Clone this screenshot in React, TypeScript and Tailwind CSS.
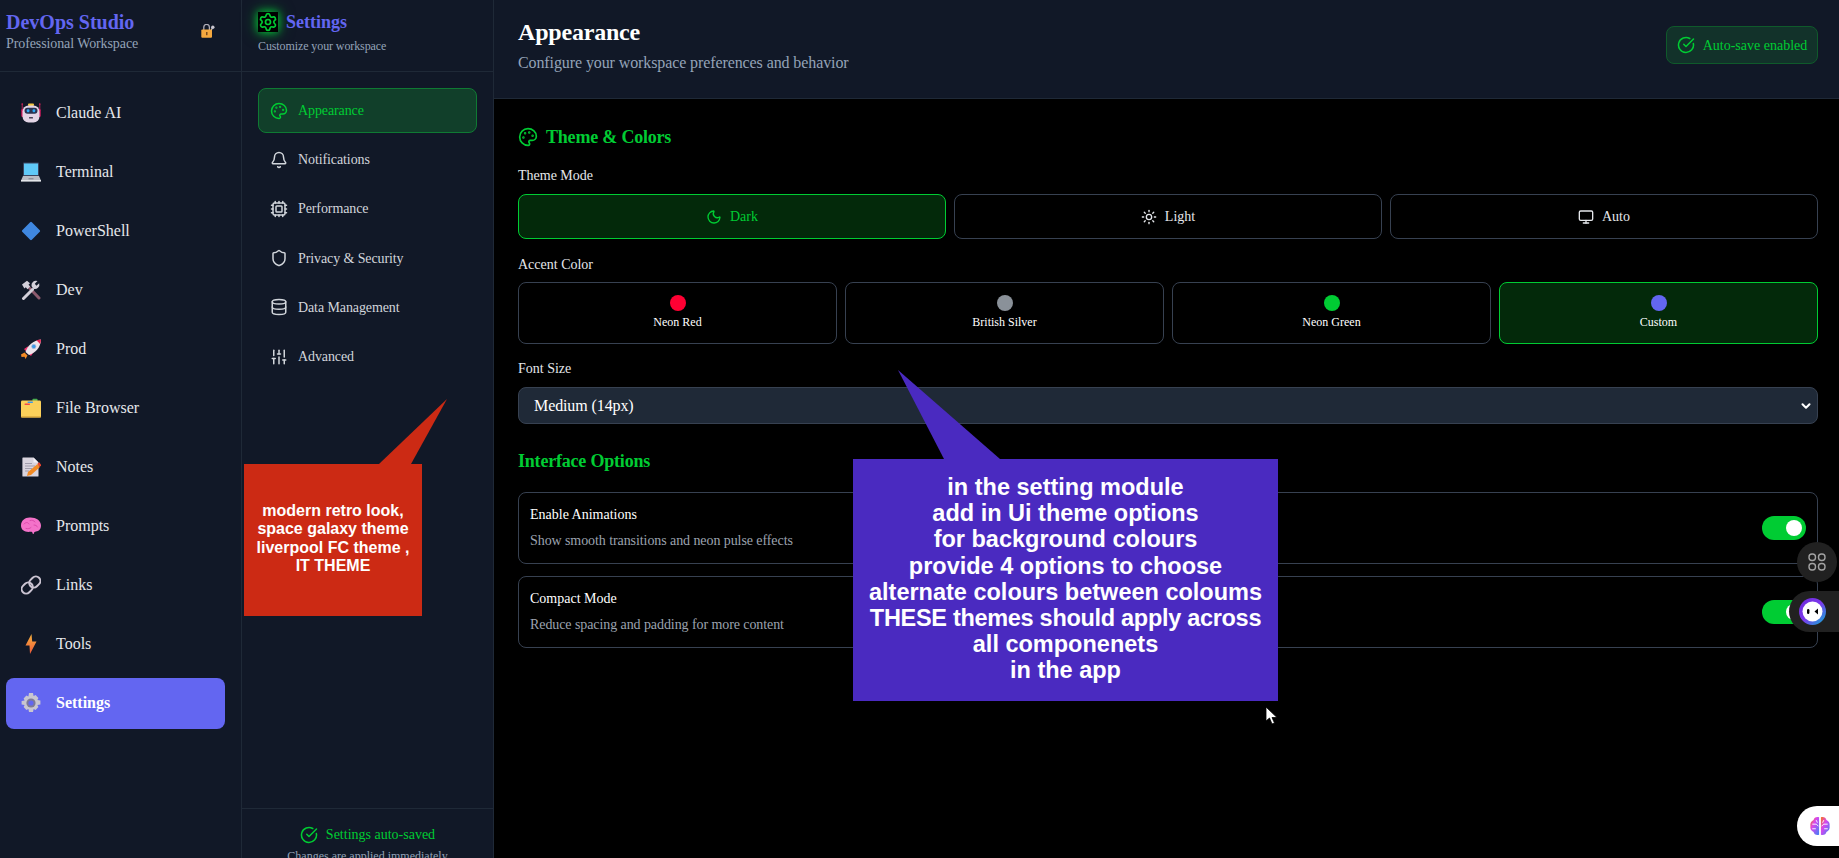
import { Palette, Bell, Cpu, Shield, Database, SlidersVertical, Settings, CircleCheckBig, Moon, Sun, Monitor, ChevronDown } from 'lucide-react'

const RobotEmoji = () => (
  <svg width="20" height="20" viewBox="0 0 20 20">
    <path d="M1.200 1v6M18.800 1v6" stroke="#e0245e" strokeWidth="0.8" />
    <circle cx="1.200" cy="1" r="0.8" fill="#e0245e" />
    <circle cx="18.800" cy="1" r="0.8" fill="#e0245e" />
    <rect x="7" y="0.5" width="6" height="2.500" rx="1" fill="#f5c542" />
    <rect x="0.3" y="6" width="3" height="8" rx="1.200" fill="#d81b60" />
    <rect x="16.700" y="6" width="3" height="8" rx="1.200" fill="#d81b60" />
    <rect x="1.500" y="2.500" width="17" height="17" rx="6" fill="#e3d5e6" />
    <rect x="3.500" y="4.800" width="13" height="6" rx="3" fill="#2b3350" />
    <rect x="5.800" y="6.300" width="2.600" height="3" rx="1" fill="#2ea8f5" />
    <rect x="11.600" y="6.300" width="2.600" height="3" rx="1" fill="#2ea8f5" />
    <rect x="8" y="14" width="4" height="1.600" rx="0.6" fill="#4a4458" />
  </svg>
)

const LaptopEmoji = () => (
  <svg width="20" height="20" viewBox="0 0 20 20">
    <rect x="2" y="0.5" width="16" height="13.500" rx="0.8" fill="#3a4560" />
    <rect x="3" y="1.500" width="14" height="11.500" fill="#5fc9f8" />
    <path d="M2 14h16l2 4.600H0z" fill="#b9bcc4" />
    <rect x="0" y="18" width="20" height="1.600" fill="#e4e6ea" />
    <rect x="7.500" y="16" width="5" height="1.400" fill="#8d919b" />
  </svg>
)

const DiamondEmoji = () => (
  <svg width="20" height="20" viewBox="0 0 20 20">
    <rect x="3.200" y="3.200" width="13.600" height="13.600" rx="1.200" transform="rotate(45 10 10)" fill="#3f87e0" />
  </svg>
)

const ToolsEmoji = () => (
  <svg width="20" height="20" viewBox="0 0 20 20">
    <path d="M7 6.500l11 11.500" stroke="#8d5b6e" strokeWidth="3" strokeLinecap="round" />
    <path d="M1 4.500L6 .8l3 2.400-1.500 1.600 1.600 1.800-2.600 2.600-1.700-2-1.400 1.200z" fill="#d4d0da" />
    <path d="M2.500 18.500l9-9" stroke="#d4d0da" strokeWidth="3" strokeLinecap="round" />
    <path d="M10.500 6a4.500 4.500 0 0 1 6-5l-2.700 2.700 1.600 2 2.800-2.500a4.500 4.500 0 0 1-6 5.500z" fill="#d4d0da" />
  </svg>
)

const RocketEmoji = () => (
  <svg width="20" height="20" viewBox="0 0 20 20">
    <path d="M0 15.500l3.500-2 3 3-2 3.500-1-2.200-3 .2z" fill="#f28a24" />
    <path d="M3 10l4.500-3-1 7zM10 17l3-4.500-7 1z" fill="#f0316e" />
    <path d="M4.500 13C6.500 6.500 12 1.500 20 .5c-.4 8-5.500 13.500-12 15.500z" fill="#ece4ea" />
    <path d="M15.500 1.300c1.400-.4 3-.7 4.500-.8-.1 1.600-.4 3.200-.9 4.600z" fill="#e8204f" />
    <circle cx="12.800" cy="7.500" r="2.200" fill="#3d9ae8" stroke="#b9bcd0" strokeWidth="0.7" />
  </svg>
)

const FolderEmoji = () => (
  <svg width="20" height="20" viewBox="0 0 20 20">
    <rect x="11.500" y="0.8" width="5" height="3" rx="0.8" fill="#4caf50" />
    <rect x="0" y="2.400" width="20" height="17.200" rx="1.400" fill="#fbd05a" />
    <rect x="6.500" y="3.600" width="5.500" height="1.300" rx="0.6" fill="#3d9ae8" />
    <rect x="3.500" y="5.600" width="5.500" height="1.300" rx="0.6" fill="#ef4b4b" />
    <rect x="0" y="18.200" width="20" height="1.400" rx="0.7" fill="#d9a63c" />
  </svg>
)

const NoteEmoji = () => (
  <svg width="20" height="20" viewBox="0 0 20 20">
    <path d="M2 0.5h10.500l5 5V19a.6.6 0 0 1-.6.6H2a.6.6 0 0 1-.6-.6V1.100A.6.6 0 0 1 2 .5z" fill="#d9d4de" />
    <path d="M12.500.5v5h5z" fill="#f4f0f6" />
    <path d="M4 6.500h7M4 9h10M4 11.500h7M4 14h4" stroke="#9a96a6" strokeWidth="0.9" />
    <path d="M6 19l1-4 9.500-8 2.500 3-9 8z" fill="#f28a24" />
    <path d="M16.500 6.500l1.700-1.200 2 2.600-1.300 2z" fill="#f0442e" />
  </svg>
)

const BrainEmoji = () => (
  <svg width="20" height="20" viewBox="0 0 20 20">
    <path d="M0 9.500C0 4.500 4 1.500 8.500 1.500c5.500-.5 11.500 2.500 11.500 8 0 3.500-2.200 5.800-5 6-1.300.1-1.800.5-2.100 1.700-.3 1.100-1 1.200-1.300 0-.3-1.100-.9-1.500-2.200-1.400C4.500 16.500 0 14.500 0 9.500z" fill="#f472c9" />
    <path d="M3 8c2-2 4-2 5 0M9 4.500c2-.8 4 0 5 1.500M5 12.500c2 .6 4 0 5-1M13 9c1.500 0 3 .8 3.500 2" stroke="#d946a8" strokeWidth="0.9" fill="none" strokeLinecap="round" />
  </svg>
)

const LinkEmoji = () => (
  <svg width="20" height="20" viewBox="0 0 20 20" fill="none" stroke="#cbc4d2" strokeWidth="2">
    <rect x="9.300" y="1" width="9" height="12" rx="4.500" transform="rotate(45 13.800 7)" />
    <rect x="1.700" y="7" width="9" height="12" rx="4.500" transform="rotate(45 6.200 13)" />
  </svg>
)

const BoltEmoji = () => (
  <svg width="20" height="20" viewBox="0 0 20 20">
    <defs>
      <linearGradient id="bolt" x1="0" y1="0" x2="0" y2="1">
        <stop offset="0" stopColor="#f6b23c" />
        <stop offset="1" stopColor="#ef5a3c" />
      </linearGradient>
    </defs>
    <path d="M10.500 0L4.500 11.500h4L9 20l6.500-12.500h-4.300z" fill="url(#bolt)" />
  </svg>
)

const GearEmoji = () => (
  <svg width="20" height="20" viewBox="0 0 20 20">
    <path d="M8 0h4l.6 3 2-.9 2.800 2.800-1 2 3 .6v4l-3 .6 1 2-2.800 2.800-2-1-.6 3.100H8l-.6-3.100-2 1-2.800-2.800 1-2-3-.6V8l3-.6-1-2 2.800-2.800 2 .9z" fill="#c9c6d0" />
    <circle cx="10" cy="10" r="4.600" fill="#7d7a98" />
    <circle cx="10" cy="10" r="2.600" fill="#6366f1" />
  </svg>
)

const LockEmoji = () => (
  <svg width="14" height="14" viewBox="0 0 14 14">
    <circle cx="11.800" cy="3.300" r="1.700" fill="#c9c6d0" />
    <path d="M11.500 3.500L10 7" stroke="#c9c6d0" strokeWidth="1.200" />
    <path d="M2.800 6V3.200a2.800 2.800 0 0 1 5.600 0V6" stroke="#b0adb8" strokeWidth="1.300" fill="none" />
    <rect x="0.300" y="5.500" width="10.700" height="8.300" rx="1" fill="#f6a93f" />
    <rect x="5" y="8" width="1.500" height="3.200" fill="#7a4a1a" />
  </svg>
)

const nav = [
  { label: 'Claude AI', icon: <RobotEmoji /> },
  { label: 'Terminal', icon: <LaptopEmoji /> },
  { label: 'PowerShell', icon: <DiamondEmoji /> },
  { label: 'Dev', icon: <ToolsEmoji /> },
  { label: 'Prod', icon: <RocketEmoji /> },
  { label: 'File Browser', icon: <FolderEmoji /> },
  { label: 'Notes', icon: <NoteEmoji /> },
  { label: 'Prompts', icon: <BrainEmoji /> },
  { label: 'Links', icon: <LinkEmoji /> },
  { label: 'Tools', icon: <BoltEmoji /> },
  { label: 'Settings', icon: <GearEmoji />, active: true },
]

const sections = [
  { label: 'Appearance', icon: Palette, active: true },
  { label: 'Notifications', icon: Bell },
  { label: 'Performance', icon: Cpu },
  { label: 'Privacy & Security', icon: Shield },
  { label: 'Data Management', icon: Database },
  { label: 'Advanced', icon: SlidersVertical },
]

const modes = [
  { label: 'Dark', icon: Moon, active: true },
  { label: 'Light', icon: Sun },
  { label: 'Auto', icon: Monitor },
]

const accents = [
  { label: 'Neon Red', dot: 'bg-[#ff0033]' },
  { label: 'British Silver', dot: 'bg-[#8a9199]' },
  { label: 'Neon Green', dot: 'bg-[#00cc33]' },
  { label: 'Custom', dot: 'bg-[#6366f1]', active: true },
]

const options = [
  { title: 'Enable Animations', desc: 'Show smooth transitions and neon pulse effects' },
  { title: 'Compact Mode', desc: 'Reduce spacing and padding for more content' },
]

export default function App() {
  return (
    <div className="relative flex h-[858px] overflow-hidden bg-black text-white font-['Liberation_Serif',serif]">
      {/* Main sidebar */}
      <aside className="w-[242px] shrink-0 bg-[#111827] border-r border-[#1f2937] flex flex-col">
        <div className="h-[72px] shrink-0 border-b border-[#1f2937] pl-[6px] pr-[26px] pt-[11px] flex justify-between">
          <div>
            <div className="text-[20px] leading-[22px] font-bold text-[#6366f1]">DevOps Studio</div>
            <div className="text-[14px] leading-[20px] mt-[1px] tracking-[-0.1px] text-[#94a3b8]">Professional Workspace</div>
          </div>
          <div className="pt-[13px]"><LockEmoji /></div>
        </div>
        <nav className="flex flex-col gap-[8px] pl-[6px] pr-[16px] pt-[15px]">
          {nav.map(item => (
            <div
              key={item.label}
              className={`h-[51.1px] flex items-center gap-[15px] pl-[15px] rounded-[8px] text-[16px] ${item.active ? 'bg-[#6366f1] text-white font-semibold' : 'text-[#e5e7eb]'}`}
            >
              {item.icon}
              {item.label}
            </div>
          ))}
        </nav>
      </aside>

      {/* Settings sidebar */}
      <aside className="w-[252px] shrink-0 bg-[#111827] border-r border-[#1f2937] flex flex-col">
        <div className="h-[72px] shrink-0 border-b border-[#1f2937] pl-[16px] pt-[12px]">
          <div className="flex items-center gap-[8px]">
            <div className="w-[20px] h-[20px] bg-black flex items-center justify-center shadow-[0_0_8px_#00cc33,0_0_16px_#00cc3380]">
              <Settings size={20} className="text-[#00cc33]" />
            </div>
            <span className="text-[18px] leading-[20px] font-bold text-[#6366f1]">Settings</span>
          </div>
          <div className="text-[12px] leading-[16px] mt-[6px] tracking-[-0.1px] text-[#94a3b8]">Customize your workspace</div>
        </div>
        <nav className="flex-1 flex flex-col gap-[4px] px-[16px] pt-[16px]">
          {sections.map(({ label, icon: Icon, active }) => (
            <div
              key={label}
              className={`h-[45.2px] flex items-center gap-[10px] pl-[11px] rounded-[8px] text-[14px] tracking-[-0.1px] border ${active ? 'bg-[#113f2a] border-[#0f7a33] text-[#00cc33]' : 'border-transparent text-[#d1d5db]'}`}
            >
              <Icon size={18} />
              {label}
            </div>
          ))}
        </nav>
        <div className="h-[50px] shrink-0 border-t border-[#1f2937] pt-[16px] text-center overflow-hidden">
          <div className="flex items-center justify-center gap-[8px] text-[14px] leading-[20px] text-[#00cc33]">
            <CircleCheckBig size={18} />
            Settings auto-saved
          </div>
          <div className="text-[12px] leading-[16px] mt-[3px] text-[#94a3b8]">Changes are applied immediately</div>
        </div>
      </aside>

      {/* Main */}
      <main className="flex-1 min-w-0">
        <header className="h-[99px] bg-[#111827] border-b border-[#1f2937] pl-[24px] pr-[21px] flex justify-between">
          <div className="pt-[16px]">
            <h1 className="text-[24px] leading-[32px] font-bold tracking-[-0.2px]">Appearance</h1>
            <p className="text-[16px] leading-[24px] mt-[3px] tracking-[-0.1px] text-[#94a3b8]">Configure your workspace preferences and behavior</p>
          </div>
          <div className="mt-[26px] h-[38px] w-[152px] flex items-center justify-center gap-[8px] rounded-[8px] border border-[#0f5a2b] bg-[#12322a] text-[14px] text-[#00cc33]">
            <CircleCheckBig size={18} />
            Auto-save enabled
          </div>
        </header>

        <div className="pl-[24px] pr-[21px] pt-[26px]">
          <h2 className="flex items-center gap-[8px] text-[18px] leading-[24px] font-bold tracking-[-0.2px] text-[#00cc33]">
            <Palette size={20} />
            Theme &amp; Colors
          </h2>

          <div className="text-[14px] leading-[20px] mt-[17px] text-[#e5e7eb]">Theme Mode</div>
          <div className="grid grid-cols-3 gap-[8px] mt-[8px]">
            {modes.map(({ label, icon: Icon, active }) => (
              <div
                key={label}
                className={`h-[45px] flex items-center justify-center gap-[8px] rounded-[8px] border text-[14px] ${active ? 'bg-[#03290a] border-[#00cc33] text-[#00cc33]' : 'border-[#374151] text-[#e5e7eb]'}`}
              >
                <Icon size={16} />
                {label}
              </div>
            ))}
          </div>

          <div className="text-[14px] leading-[20px] mt-[16px] text-[#e5e7eb]">Accent Color</div>
          <div className="grid grid-cols-4 gap-[8px] mt-[7px]">
            {accents.map(a => (
              <div
                key={a.label}
                className={`h-[62px] flex flex-col items-center pt-[12px] rounded-[8px] border text-[12px] leading-[16px] ${a.active ? 'bg-[#03290a] border-[#00cc33]' : 'border-[#374151]'}`}
              >
                <span className={`w-[16px] h-[16px] rounded-full ${a.dot}`} />
                <span className="mt-[3px]">{a.label}</span>
              </div>
            ))}
          </div>

          <div className="text-[14px] leading-[20px] mt-[15px] text-[#e5e7eb]">Font Size</div>
          <div className="h-[37px] mt-[8px] flex items-center justify-between pl-[15px] pr-[4px] rounded-[8px] border border-[#374151] bg-[#1f2937] text-[16px] tracking-[-0.1px]">
            Medium (14px)
            <ChevronDown size={14} strokeWidth={3.5} />
          </div>

          <h2 className="text-[18px] leading-[24px] font-bold tracking-[-0.2px] text-[#00cc33] mt-[25px]">Interface Options</h2>
          <div className="flex flex-col gap-[12px] mt-[19px]">
            {options.map(o => (
              <div key={o.title} className="h-[72px] flex items-center justify-between pl-[11px] pr-[11px] rounded-[8px] border border-[#374151]">
                <div>
                  <div className="text-[14px] leading-[20px]">{o.title}</div>
                  <div className="text-[14px] leading-[20px] mt-[6px] tracking-[-0.08px] text-[#9ca3af]">{o.desc}</div>
                </div>
                <div className="w-[44px] h-[24px] rounded-full bg-[#00cc33] flex items-center justify-end pr-[4px]">
                  <span className="w-[16px] h-[16px] rounded-full bg-white" />
                </div>
              </div>
            ))}
          </div>
        </div>
      </main>

      {/* Screenshot annotations */}
      <svg className="absolute left-[370px] top-[395px]" width="90" height="75" viewBox="0 0 90 75">
        <path d="M9 69L77 4 41 69z" fill="#cc2a14" />
      </svg>
      <div className="absolute left-[244px] top-[464px] w-[178px] h-[152px] pt-[38px] bg-[#cc2a14] text-center font-['Liberation_Sans',sans-serif] font-bold text-[16px] leading-[18.4px]">
        modern retro look,<br />space galaxy theme<br />liverpool FC theme ,<br />IT THEME
      </div>
      <svg className="absolute left-[890px] top-[365px]" width="120" height="100" viewBox="0 0 120 100">
        <path d="M8 5L54 94h56z" fill="#4a2ac0" />
      </svg>
      <div className="absolute left-[853px] top-[459px] w-[425px] h-[242px] pt-[15px] bg-[#4a2ac0] text-center font-['Liberation_Sans',sans-serif] font-bold text-[23.5px] leading-[26.2px]">
        in the setting module<br />add in Ui theme options<br />for background colours<br />provide 4 options to choose<br />alternate colours between coloums<br /><span className="tracking-[-0.3px]">THESE themes should apply across</span><br />all componenets<br />in the app
      </div>

      {/* Mouse pointer */}
      <svg className="absolute left-[1265px] top-[706px]" width="13" height="19" viewBox="0 0 13 19">
        <path d="M1 1v14l3.500-3 2.500 6 2.500-1-2.500-5.500H12z" fill="#fff" stroke="#000" strokeWidth="0.8" />
      </svg>

      {/* Floating widgets */}
      <div className="absolute left-[1797px] top-[542px] w-[40px] h-[40px] rounded-full bg-[#212121] flex items-center justify-center">
        <svg width="18" height="18" viewBox="0 0 18 18" fill="none" stroke="#a3a3a3" strokeWidth="1.400">
          <rect x="1" y="1" width="6.500" height="6.500" rx="3" />
          <rect x="10.500" y="1" width="6.500" height="6.500" rx="3" />
          <rect x="1" y="10.500" width="6.500" height="6.500" rx="3" />
          <rect x="10.500" y="10.500" width="6.500" height="6.500" rx="3" />
        </svg>
      </div>
      <div className="absolute left-[1789px] top-[591px] w-[50px] h-[41px] rounded-l-full bg-[#212121] pl-[10px] flex items-center">
        <svg width="27" height="27" viewBox="0 0 27 27">
          <defs>
            <linearGradient id="ring" x1="0" y1="0" x2="1" y2="1">
              <stop offset="0" stopColor="#6d28d9" />
              <stop offset="0.5" stopColor="#7c3aed" />
              <stop offset="1" stopColor="#06b6d4" />
            </linearGradient>
          </defs>
          <circle cx="13.500" cy="13.500" r="13.500" fill="url(#ring)" />
          <circle cx="13.500" cy="13.500" r="10" fill="#fff" />
          <rect x="8" y="11" width="2.400" height="5" rx="1.200" fill="#000" />
          <path d="M19 10.500l-3.500 3 3.500 3z" fill="#000" />
        </svg>
      </div>
      <div className="absolute left-[1797px] top-[806px] w-[42px] h-[40px] rounded-l-full bg-white pl-[12px] flex items-center">
        <svg width="22" height="22" viewBox="0 0 24 24" fill="none">
          <defs>
            <linearGradient id="brain" x1="0" y1="0" x2="1" y2="1">
              <stop offset="0" stopColor="#f97316" />
              <stop offset="0.4" stopColor="#d946ef" />
              <stop offset="1" stopColor="#3b82f6" />
            </linearGradient>
          </defs>
          <path d="M11 2.500C8 1.500 5.500 3 5 5.500 2.500 6.500 1 9 1.500 12c-.5 3 1 5.500 3.500 6.500.5 2.500 3 4 6 3z" fill="url(#brain)" />
          <path d="M13 2.500c3-1 5.500.5 6 3 2.500 1 4 3.500 3.500 6.500.5 3-1 5.500-3.500 6.500-.5 2.500-3 4-6 3z" fill="url(#brain)" />
          <path d="M4 10h4l2 2M4 15h3M20 10h-4l-2 2M20 15h-3M8 6l1 2M16 6l-1 2" stroke="#fff" strokeWidth="1" strokeLinecap="round" />
        </svg>
      </div>
    </div>
  )
}
